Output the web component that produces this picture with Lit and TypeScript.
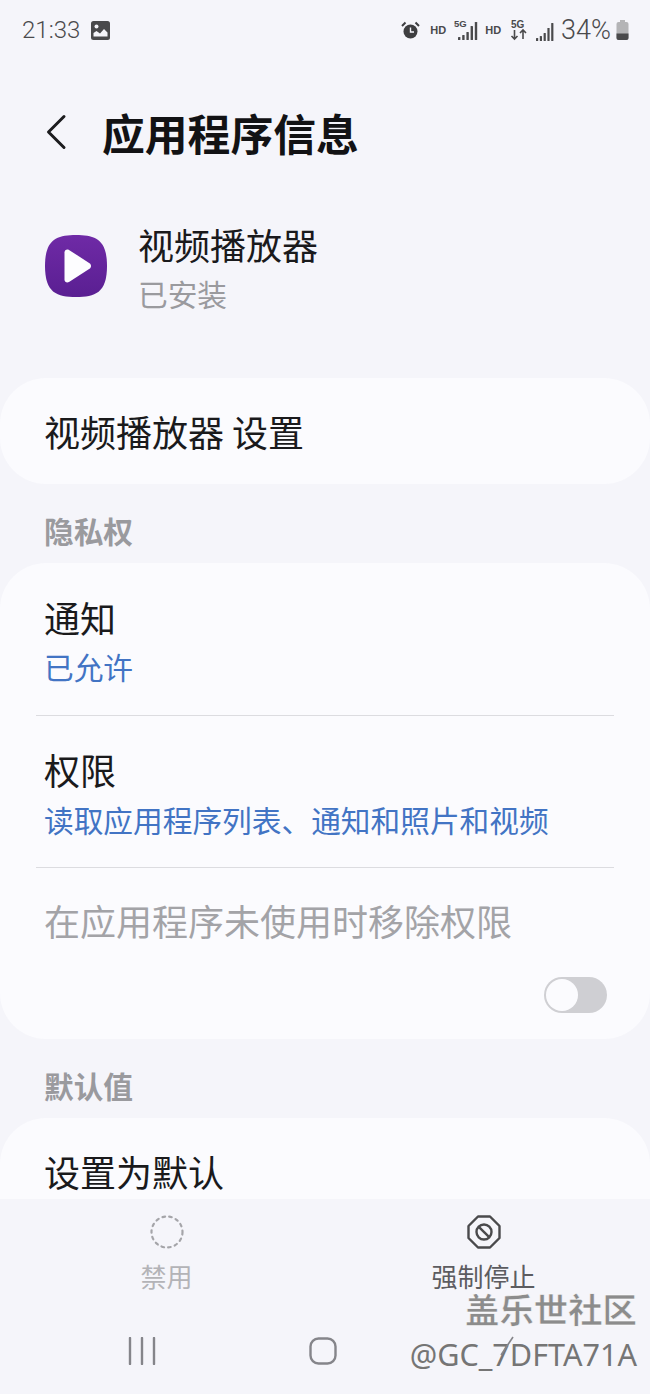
import { LitElement, html, css, svg } from "lit";
import { customElement } from "lit/decorators.js";

@customElement("app-root")
export class AppRoot extends LitElement {
  static styles = css`
    :host {
      display: block;
      width: 650px;
      height: 1394px;
      font-family: "Noto Sans CJK SC", "Noto Sans", sans-serif;
      color: #1c1c1e;
    }
    .page {
      position: relative;
      width: 650px;
      height: 1394px;
      background: #f5f5fa;
      overflow: hidden;
      display: flex;
      flex-direction: column;
    }
    .status {
      height: 60px;
      flex: none;
      display: flex;
      align-items: center;
      justify-content: space-between;
      padding: 0 21px 0 22px;
      color: #4a4a4c;
      box-sizing: border-box;
    }
    .status-left, .status-right { display: flex; align-items: center; }
    .time {
      font-family: Roboto, sans-serif;
      font-size: 24px;
      font-weight: 300;
      line-height: 60px;
      margin-right: 11px;
    }
    .pct {
      font-family: Roboto, sans-serif;
      font-size: 27px;
      font-weight: 300;
      line-height: 60px;
      margin: 0 5px 0 7px;
    }
    .status svg { display: block; flex: none; }
    .sb-hd {
      font-family: "Liberation Sans", sans-serif;
      font-weight: 700;
      font-size: 11px;
      line-height: 60px;
    }
    .scroll { height: 1139px; flex: none; overflow: hidden; }
    .header {
      height: 148px;
      box-sizing: border-box;
      display: flex;
      align-items: center;
      padding: 0 0 4px 43px;
    }
    .header svg { flex: none; margin-right: 32px; }
    h1 {
      margin: 0;
      font-size: 42.8px;
      font-weight: 700;
      line-height: 60px;
      color: #121214;
    }
    .app {
      height: 170px;
      box-sizing: border-box;
      display: flex;
      align-items: flex-start;
      padding: 11px 0 0 45px;
    }
    .app svg { flex: none; margin: 16px 31px 0 0; }
    .app-name { font-size: 36px; line-height: 50px; color: #1a1a1c; }
    .app-sub { font-size: 29.7px; line-height: 44px; margin-top: 3px; color: #9a9a9e; }
    .card {
      background: #fbfbfe;
      border-radius: 46px;
      overflow: hidden;
    }
    .card-single {
      height: 106px;
      display: flex;
      align-items: center;
      padding: 0 44px;
      font-size: 36px;
      color: #1a1a1c;
      box-sizing: border-box;
    }
    .section {
      font-size: 29.7px;
      font-weight: 700;
      color: #9a9a9e;
      padding-left: 44px;
      height: 79px;
      line-height: 94px;
      box-sizing: border-box;
    }
    .row { padding: 0 44px; box-sizing: border-box; }
    .row-title { font-size: 36px; line-height: 50px; color: #1a1a1c; }
    .row-sub { font-size: 29.7px; line-height: 42px; color: #4274c4; white-space: nowrap; }
    .r1 { padding-top: 29px; height: 152px; }
    .r1 .row-sub { margin-top: 4px; }
    .r2 { padding-top: 28px; height: 151px; }
    .r2 .row-sub { margin-top: 5px; }
    .divider { height: 1px; background: #dcdce0; margin: 0 36px; }
    .r3 { padding-top: 27px; height: 171px; }
    .muted { color: #a3a3a7; font-size: 36px; line-height: 50px; }
    .toggle-line { display: flex; justify-content: flex-end; margin: 32px -1px 0 0; }
    .toggle {
      width: 63px;
      height: 36px;
      border-radius: 18px;
      background: #cfcfd3;
      position: relative;
    }
    .knob {
      position: absolute;
      left: 2px;
      top: 2px;
      width: 32px;
      height: 32px;
      border-radius: 50%;
      background: #fbfbfe;
    }
    .card3 { border-radius: 46px 46px 0 0; height: 200px; }
    .r4 { padding-top: 28px; }
    .bottom {
      height: 195px;
      flex: none;
      background: #f5f5fa;
      position: relative;
    }
    .actions { display: grid; grid-template-columns: 1fr 1fr; padding: 16px 8px 0 8px; }
    .action { display: flex; flex-direction: column; align-items: center; }
    .action span { font-size: 26px; line-height: 36px; margin-top: 9px; color: #5c5c60; }
    .action.off span { color: #b3b3b7; }
    .nav {
      display: grid;
      grid-template-columns: repeat(3, 181px);
      justify-content: center;
      justify-items: center;
      margin: 43px 4px 0 0;
    }
    .wm {
      position: absolute;
      right: 13px;
      top: 88px;
      text-align: right;
      pointer-events: none;
    }
    .wm1 {
      font-size: 34.4px;
      line-height: 42px;
      font-weight: 700;
      color: #8c8c8c;
      -webkit-text-stroke: 0.5px #fff;
    }
    .wm2 {
      font-family: "Noto Sans", sans-serif;
      font-size: 30.6px;
      line-height: 42px;
      margin-top: 4px;
      color: #757575;
      white-space: nowrap;
    }
    .slash { position: absolute; right: 123px; top: 49px; }
  `;

  render() {
    return html`<div class="page">
      <div class="status">
        <div class="status-left">
          <span class="time">21:33</span>
          <svg width="19" height="19" viewBox="0 0 19 19">
            <rect width="19" height="19" rx="2.5" fill="#4a4a4c"/>
            <circle cx="5.5" cy="5.5" r="2" fill="#f5f5fa"/>
            <path d="M2.5 15.5v-3.5l3-2 3.5 2.5 4-4.5 3.5 3.5v4z" fill="#f5f5fa"/>
          </svg>
        </div>
        <div class="status-right">
          <svg width="19" height="19" viewBox="0 0 19 19" style="margin-right:10px">
            <circle cx="9.5" cy="10.5" r="7" fill="#3e3e40"/>
            <path d="M9.5 6.5v4.5h3.5" fill="none" stroke="#f5f5fa" stroke-width="1.4"/>
            <path d="M1 5l3.5-3.5M18 5l-3.5-3.5" stroke="#3e3e40" stroke-width="2"/>
          </svg>
          <span class="sb-hd" style="margin-right:8px">HD</span>
          <svg width="24" height="24" viewBox="0 0 24 24">
            <text x="0" y="9" font-size="9.5" font-weight="700" font-family="Liberation Sans" fill="#4a4a4c">5G</text>
            <g transform="translate(4,4)">
              ${[3, 5, 8, 14, 18].map(
                (v, i) => svg`<rect x=${i * 4.2} y=${18 - v} width="2.4" height=${v} rx="0.6" fill="#4a4a4c"/>`
              )}
            </g>
          </svg>
          <span class="sb-hd" style="margin:0 9px 0 7px">HD</span>
          <svg width="18" height="24" viewBox="0 0 18 24" style="margin-right:8px">
            <text x="1" y="10" font-size="10" font-weight="700" font-family="Liberation Sans" fill="#4a4a4c">5G</text>
            <path d="M4.5 12v9M1.5 18l3 3 3-3M13 21v-9M10 15l3-3 3 3" fill="none" stroke="#4a4a4c" stroke-width="1.6"/>
          </svg>
          <svg width="18" height="18" viewBox="0 0 18 18" style="margin-top:3px">
            ${[3, 5, 8, 13, 18].map(
              (v, i) => svg`<rect x=${i * 3.8} y=${18 - v} width="2.2" height=${v} rx="0.5" fill="#4a4a4c"/>`
            )}
          </svg>
          <span class="pct">34%</span>
          <svg width="13" height="20" viewBox="0 0 13 20">
            <rect x="4" y="0" width="5" height="2" fill="#b4b4b6"/>
            <rect x="0.5" y="2" width="12" height="18" rx="2" fill="#b4b4b6"/>
            <path d="M0.5 13.5h12V18a2 2 0 0 1-2 2h-8a2 2 0 0 1-2-2z" fill="#4a4a4c"/>
          </svg>
        </div>
      </div>

      <div class="scroll">
        <div class="header">
          <svg width="27" height="40" viewBox="0 0 27 40">
            <path d="M21 4.5 5.5 20 21 35.5" fill="none" stroke="#1c1c1e" stroke-width="3" stroke-linecap="round" stroke-linejoin="round"/>
          </svg>
          <h1>应用程序信息</h1>
        </div>

        <div class="app">
          <svg width="62" height="62" viewBox="0 0 62 62">
            <defs>
              <linearGradient id="g" x1="0" y1="0" x2="0" y2="1">
                <stop offset="0" stop-color="#6f2aa6"/>
                <stop offset="1" stop-color="#5a1f92"/>
              </linearGradient>
            </defs>
            <path d="M31 0C50 0 62 4 62 31S50 62 31 62 0 58 0 31 12 0 31 0Z" fill="url(#g)"/>
            <path d="M19.5 17.5c0-2.6 2.4-3.8 4.5-2.6l20.5 13.3c2 1.3 2 4.2 0 5.5L24 47c-2.1 1.2-4.5 0-4.5-2.6Z" fill="#fdfdff"/>
          </svg>
          <div>
            <div class="app-name">视频播放器</div>
            <div class="app-sub">已安装</div>
          </div>
        </div>

        <div class="card card-single">视频播放器 设置</div>

        <div class="section">隐私权</div>
        <div class="card">
          <div class="row r1">
            <div class="row-title">通知</div>
            <div class="row-sub">已允许</div>
          </div>
          <div class="divider"></div>
          <div class="row r2">
            <div class="row-title">权限</div>
            <div class="row-sub">读取应用程序列表、通知和照片和视频</div>
          </div>
          <div class="divider"></div>
          <div class="row r3">
            <div class="muted">在应用程序未使用时移除权限</div>
            <div class="toggle-line"><div class="toggle"><div class="knob"></div></div></div>
          </div>
        </div>

        <div class="section">默认值</div>
        <div class="card card3">
          <div class="row r4"><div class="row-title">设置为默认</div></div>
        </div>
      </div>

      <div class="bottom">
        <div class="actions">
          <div class="action off">
            <svg width="34" height="34" viewBox="0 0 34 34">
              <circle cx="17" cy="17" r="15.5" fill="none" stroke="#a5a5a9" stroke-width="2.2" stroke-dasharray="2.6 4.2" stroke-linecap="round"/>
            </svg>
            <span>禁用</span>
          </div>
          <div class="action">
            <svg width="34" height="34" viewBox="0 0 34 34">
              <path d="M11 1.5h12L32.5 11v12L23 32.5H11L1.5 23V11Z" fill="none" stroke="#4a4a4c" stroke-width="2.4" stroke-linejoin="round"/>
              <circle cx="17" cy="17" r="7.5" fill="none" stroke="#4a4a4c" stroke-width="2.4"/>
              <path d="M11.8 11.8l10.4 10.4" stroke="#4a4a4c" stroke-width="2.4"/>
            </svg>
            <span>强制停止</span>
          </div>
        </div>
        <div class="nav">
          <svg width="28" height="28" viewBox="0 0 28 28">
            <path d="M2 1v26M14 1v26M26 1v26" stroke="#85858a" stroke-width="2.4" stroke-linecap="round"/>
          </svg>
          <svg width="28" height="28" viewBox="0 0 28 28">
            <rect x="1.5" y="1.5" width="25" height="25" rx="8" fill="none" stroke="#85858a" stroke-width="2.4"/>
          </svg>
          <div style="width:28px"></div>
        </div>
        <div class="wm">
          <div class="wm1">盖乐世社区</div>
          <div class="wm2">@GC_7DFTA71A</div>
          <svg class="slash" width="14" height="20" viewBox="0 0 14 20">
            <path d="M1 19 13 1" stroke="#85858a" stroke-width="1.6"/>
          </svg>
        </div>
      </div>
    </div>`;
  }
}
